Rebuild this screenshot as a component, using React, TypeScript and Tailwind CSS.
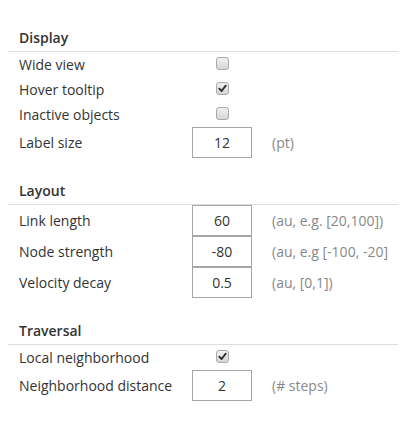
import React from "react";

type Row =
  | { kind: "check"; label: string; checked: boolean }
  | { kind: "input"; label: string; value: string; hint: string };

const sections: { title: string; rows: Row[] }[] = [
  {
    title: "Display",
    rows: [
      { kind: "check", label: "Wide view", checked: false },
      { kind: "check", label: "Hover tooltip", checked: true },
      { kind: "check", label: "Inactive objects", checked: false },
      { kind: "input", label: "Label size", value: "12", hint: "(pt)" },
    ],
  },
  {
    title: "Layout",
    rows: [
      { kind: "input", label: "Link length", value: "60", hint: "(au, e.g. [20,100])" },
      { kind: "input", label: "Node strength", value: "-80", hint: "(au, e.g [-100, -20]" },
      { kind: "input", label: "Velocity decay", value: "0.5", hint: "(au, [0,1])" },
    ],
  },
  {
    title: "Traversal",
    rows: [
      { kind: "check", label: "Local neighborhood", checked: true },
      { kind: "input", label: "Neighborhood distance", value: "2", hint: "(# steps)" },
    ],
  },
];

function Checkbox({ checked }: { checked: boolean }) {
  return (
    <div className="w-[13px] h-[13px] -mt-[3px] rounded-[3px] border border-[#a9a9a9] bg-gradient-to-b from-[#f0f0f0] to-[#d6d6d6] flex items-center justify-center">
      {checked && (
        <svg width="9" height="9" viewBox="0 0 10 10">
          <path d="M1.5 5.2 L4 7.8 L8.6 1.8" fill="none" stroke="#2b2b2b" strokeWidth="2" strokeLinecap="round" strokeLinejoin="round" />
        </svg>
      )}
    </div>
  );
}

export default function App() {
  return (
    <div
      className="w-[405px] h-[433px] bg-white pt-[28px] pl-[8px] pr-[7px] text-[14px] text-[#333]"
      style={{ fontFamily: '"Open Sans", "Liberation Sans", sans-serif' }}
    >
      {sections.map((s, i) => (
        <div key={s.title} className={i > 0 ? "mt-[23px]" : ""}>
          <div className="leading-[20px] pb-[3px] pl-[11px] font-semibold border-b border-[#dddddd]">
            {s.title}
          </div>
          {s.rows.map((r) =>
            r.kind === "check" ? (
              <div key={r.label} className="flex items-center h-[25px] leading-[20px]">
                <div className="w-[184px] pl-[11px]">{r.label}</div>
                <div className="w-[60px] flex justify-center">
                  <Checkbox checked={r.checked} />
                </div>
              </div>
            ) : (
              <div key={r.label} className="flex items-center h-[31px] leading-[20px]">
                <div className="w-[184px] pl-[11px]">{r.label}</div>
                <div className="w-[60px] h-[31px] border border-[#a6a6a6] flex items-center justify-center">
                  {r.value}
                </div>
                <div className="ml-[20px] text-[#888] whitespace-nowrap">{r.hint}</div>
              </div>
            )
          )}
        </div>
      ))}
    </div>
  );
}
